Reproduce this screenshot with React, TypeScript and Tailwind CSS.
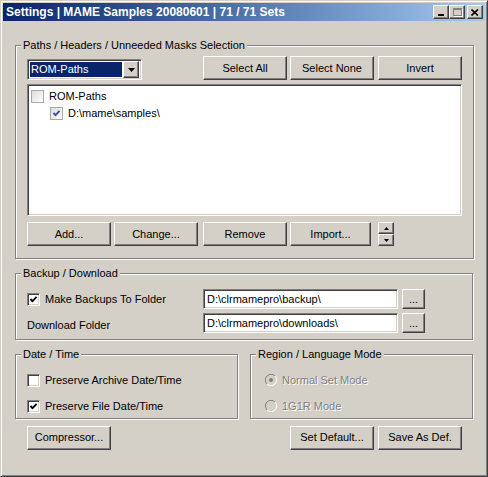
import React from "react";

const raised =
  "bg-[#d4d0c8] border border-t-white border-l-white border-r-[#404040] border-b-[#404040] shadow-[inset_-1px_-1px_0_#808080,inset_1px_1px_0_#d4d0c8]";
const sunken =
  "border border-t-[#808080] border-l-[#808080] border-r-white border-b-white shadow-[inset_1px_1px_0_#404040,inset_-1px_-1px_0_#d4d0c8]";

const Button = ({ label, className = "" }: { label: string; className?: string }) => (
  <div
    className={`${raised} h-[24px] flex items-center justify-center text-[11px] leading-none text-black ${className}`}
  >
    {label}
  </div>
);

const Group = ({
  title,
  className = "",
  children,
}: {
  title: string;
  className?: string;
  children: React.ReactNode;
}) => (
  <fieldset
    className={`border border-[#808080] shadow-[inset_1px_1px_0_#fff,1px_1px_0_#fff] ${className}`}
  >
    <legend className="ml-[5px] px-[2px] text-[11px] leading-[13px] text-black bg-[#d4d0c8]">
      {title}
    </legend>
    {children}
  </fieldset>
);

const Tick = ({ color = "#000" }: { color?: string }) => (
  <svg width="9" height="9" viewBox="0 0 9 9">
    <path d="M1.5 4 L3.5 6.2 L7.6 1.8" fill="none" stroke={color} strokeWidth="1.9" />
  </svg>
);

const CheckBox = ({ checked }: { checked?: boolean }) => (
  <div className={`${sunken} w-[13px] h-[13px] bg-white flex items-center justify-center shrink-0`}>
    {checked && <Tick />}
  </div>
);

const TreeCheck = ({ checked }: { checked?: boolean }) => (
  <div className="w-[13px] h-[13px] border border-[#a8a8a8] bg-gradient-to-br from-[#dcdcdc] to-white flex items-center justify-center shrink-0">
    {checked && <Tick color="#3b4ea0" />}
  </div>
);

const Radio = ({ checked }: { checked?: boolean }) => (
  <svg width="12" height="12" viewBox="0 0 12 12" className="shrink-0">
    <path d="M10 2 A5.5 5.5 0 0 0 2 10" fill="none" stroke="#808080" />
    <path d="M2 10 A5.5 5.5 0 0 0 10 2" fill="none" stroke="#fff" />
    <circle cx="6" cy="6" r="4.5" fill="#d4d0c8" />
    {checked && <circle cx="6" cy="6" r="2" fill="#808080" />}
  </svg>
);

const disabledText = "text-[#808080] [text-shadow:1px_1px_0_#fff]";

const TitleButton = ({ children, className = "" }: { children: React.ReactNode; className?: string }) => (
  <div className={`${raised} w-[16px] h-[14px] flex items-center justify-center ${className}`}>
    {children}
  </div>
);

export default function App() {
  return (
    <div className="w-[488px] h-[477px] bg-[#d4d0c8] border border-t-[#d4d0c8] border-l-[#d4d0c8] border-r-[#404040] border-b-[#404040] shadow-[inset_1px_1px_0_#fff,inset_-1px_-1px_0_#808080] p-[2px] font-['Liberation_Sans',Arial,sans-serif] text-[11px] text-black select-none">
      {/* title bar */}
      <div className="h-[18px] flex items-center bg-gradient-to-r from-[#0a246a] to-[#a6caf0] pl-[3px] pr-[2px]">
        <span className="text-white font-bold text-[12px] leading-none">
          Settings | MAME Samples 20080601 | 71 / 71 Sets
        </span>
        <div className="ml-auto flex items-center">
          <TitleButton>
            <div className="w-[6px] h-[2px] bg-black mt-[5px] -ml-[1px]" />
          </TitleButton>
          <TitleButton>
            <div className="w-[9px] h-[8px] border border-[#808080] border-t-2 shadow-[1px_1px_0_#fff]" />
          </TitleButton>
          <TitleButton className="ml-[2px]">
            <svg width="8" height="7" viewBox="0 0 8 7">
              <path d="M0.5 0.5 L7 6.5 M7 0.5 L0.5 6.5" stroke="#000" strokeWidth="1.6" />
            </svg>
          </TitleButton>
        </div>
      </div>

      <div className="px-[12px] pt-[18px]">
        {/* paths group */}
        <Group title="Paths / Headers / Unneeded Masks Selection">
          <div className="px-[11px] pt-[4px] pb-[12px]">
            <div className="flex items-start">
              <div className={`${sunken} mt-[3px] w-[115px] h-[21px] bg-white flex items-center pl-[2px] pr-[2px]`}>
                <div className="flex-1 h-[15px] bg-[#0a246a] text-white flex items-center pl-[1px] leading-none">
                  ROM-Paths
                </div>
                <div className={`${raised} w-[16px] h-[17px] ml-[1px] flex items-center justify-center`}>
                  <svg width="7" height="4" viewBox="0 0 7 4">
                    <path d="M0 0 H7 L3.5 4 Z" fill="#000" />
                  </svg>
                </div>
              </div>
              <Button label="Select All" className="ml-[61px] w-[84px]" />
              <Button label="Select None" className="ml-[3px] w-[84px]" />
              <Button label="Invert" className="ml-[4px] w-[84px]" />
            </div>

            <div className={`${sunken} mt-[4px] w-[435px] h-[132px] bg-white p-[3px]`}>
              <div className="flex items-center h-[17px]">
                <TreeCheck />
                <span className="ml-[5px]">ROM-Paths</span>
              </div>
              <div className="flex items-center h-[17px] pl-[19px]">
                <TreeCheck checked />
                <span className="ml-[5px]">{"D:\\mame\\samples\\"}</span>
              </div>
            </div>

            <div className="mt-[6px] flex items-start">
              <Button label="Add..." className="w-[84px]" />
              <Button label="Change..." className="ml-[3px] w-[84px]" />
              <Button label="Remove" className="ml-[5px] w-[84px]" />
              <Button label="Import..." className="ml-[3px] w-[81px]" />
              <div className="ml-[7px] w-[16px] h-[24px] flex flex-col">
                <div className={`${raised} h-[12px] flex items-center justify-center`}>
                  <svg width="5" height="3" viewBox="0 0 5 3">
                    <path d="M0 3 H5 L2.5 0 Z" fill="#000" />
                  </svg>
                </div>
                <div className={`${raised} h-[12px] flex items-center justify-center`}>
                  <svg width="5" height="3" viewBox="0 0 5 3">
                    <path d="M0 0 H5 L2.5 3 Z" fill="#000" />
                  </svg>
                </div>
              </div>
            </div>
          </div>
        </Group>

        {/* backup group */}
        <Group title="Backup / Download" className="mt-[8px]">
          <div className="px-[11px] pt-[9px] pb-[5px]">
            <div className="flex items-center">
              <div className="w-[176px] flex items-center">
                <CheckBox checked />
                <span className="ml-[5px]">Make Backups To Folder</span>
              </div>
              <div className={`${sunken} w-[195px] h-[20px] bg-white flex items-center pl-[3px]`}>
                {"D:\\clrmamepro\\backup\\"}
              </div>
              <Button label="..." className="ml-[4px] w-[23px] !h-[20px]" />
            </div>
            <div className="mt-[4px] flex items-center">
              <div className="w-[176px] flex items-center pt-[4px]">
                <span>Download Folder</span>
              </div>
              <div className={`${sunken} w-[195px] h-[20px] bg-white flex items-center pl-[3px]`}>
                {"D:\\clrmamepro\\downloads\\"}
              </div>
              <Button label="..." className="ml-[4px] w-[23px] !h-[20px]" />
            </div>
          </div>
        </Group>

        <div className="mt-[8px] flex gap-[12px]">
          <Group title="Date / Time" className="w-[223px]">
            <div className="px-[11px] pt-[13px] pb-[5px]">
              <div className="flex items-center h-[13px]">
                <CheckBox />
                <span className="ml-[5px]">Preserve Archive Date/Time</span>
              </div>
              <div className="flex items-center h-[13px] mt-[13px]">
                <CheckBox checked />
                <span className="ml-[5px]">Preserve File Date/Time</span>
              </div>
            </div>
          </Group>
          <Group title="Region / Language Mode" className="w-[223px]">
            <div className="px-[14px] pt-[13px] pb-[5px]">
              <div className="flex items-center h-[13px]">
                <Radio checked />
                <span className={`ml-[5px] ${disabledText}`}>Normal Set Mode</span>
              </div>
              <div className="flex items-center h-[13px] mt-[13px]">
                <Radio />
                <span className={`ml-[5px] ${disabledText}`}>1G1R Mode</span>
              </div>
            </div>
          </Group>
        </div>

        <div className="mt-[7px] flex px-[12px]">
          <Button label="Compressor..." className="w-[84px]" />
          <Button label="Set Default..." className="ml-auto w-[84px]" />
          <Button label="Save As Def." className="ml-[4px] mr-[-1px] w-[84px]" />
        </div>
      </div>
    </div>
  );
}
